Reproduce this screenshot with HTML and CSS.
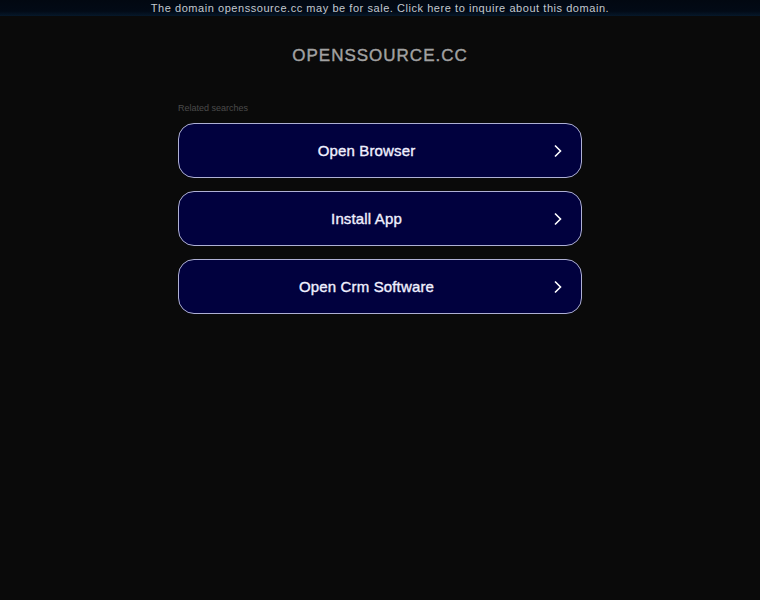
FILE: index.html
```html
<!DOCTYPE html>
<html>
<head>
<meta charset="utf-8">
<link rel="stylesheet" href="styles.css">
</head>
<body>
<div class="topbar">The domain openssource.cc may be for sale. Click here to inquire about this domain.</div>
<div class="page">
  <h1 class="domain">OPENSSOURCE.CC</h1>
  <div class="label">Related searches</div>
  <div class="list">
    <a class="btn" href="#"><span>Open Browser</span><svg class="chev" width="10" height="14" viewBox="0 0 10 14"><path d="M2 1.5 L7.5 7 L2 12.5" fill="none" stroke="#fff" stroke-width="1.6"/></svg></a>
    <a class="btn" href="#"><span>Install App</span><svg class="chev" width="10" height="14" viewBox="0 0 10 14"><path d="M2 1.5 L7.5 7 L2 12.5" fill="none" stroke="#fff" stroke-width="1.6"/></svg></a>
    <a class="btn" href="#"><span>Open Crm Software</span><svg class="chev" width="10" height="14" viewBox="0 0 10 14"><path d="M2 1.5 L7.5 7 L2 12.5" fill="none" stroke="#fff" stroke-width="1.6"/></svg></a>
  </div>
</div>
</body>
</html>
```
FILE: styles.css
```css
html, body {
  margin: 0;
  padding: 0;
  background: #0a0a0a;
  font-family: "Liberation Sans", Arial, sans-serif;
}
.topbar {
  height: 16px;
  line-height: 16px;
  text-align: center;
  font-size: 11px;
  letter-spacing: 0.55px;
  color: #c3c8cf;
  background: linear-gradient(to bottom, #020811 0%, #020a16 70%, #06182a 100%);
}
.page {
  width: 404px;
  margin: 0 auto;
}
.domain {
  margin: 0;
  height: 56px;
  box-sizing: border-box;
  padding-top: 30px;
  text-align: center;
  font-size: 17px;
  font-weight: normal;
  -webkit-text-stroke: 0.4px #a2a2a2;
  letter-spacing: 1px;
  color: #a2a2a2;
  line-height: 20px;
}
.label {
  margin-top: 31px;
  font-size: 9px;
  color: #4a4a4a;
  height: 11px;
  line-height: 11px;
  margin-bottom: 9px;
}
.list {
  display: flex;
  flex-direction: column;
  gap: 13px;
}
.btn {
  position: relative;
  display: flex;
  align-items: center;
  justify-content: center;
  height: 55px;
  box-sizing: border-box;
  padding-right: 27px;
  border: 1px solid #aeb0d4;
  border-radius: 16px;
  background: #01013e;
  color: #f0f0ff;
  text-decoration: none;
  font-size: 15px;
  -webkit-text-stroke: 0.35px #f0f0ff;
  letter-spacing: 0.15px;
}
.chev {
  position: absolute;
  right: 18px;
  top: 20px;
}
```
